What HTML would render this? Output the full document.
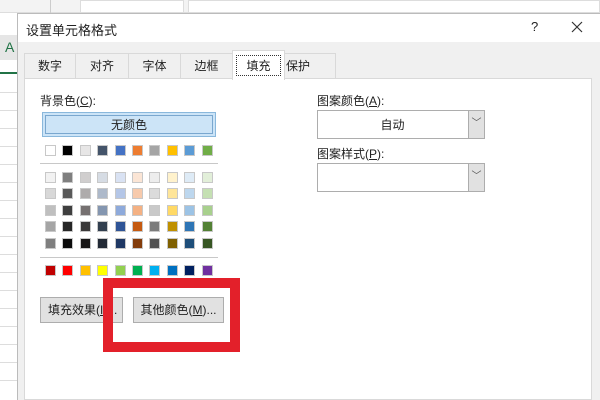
<!DOCTYPE html>
<html><head><meta charset="utf-8"><style>
*{margin:0;padding:0;box-sizing:border-box}
body{width:600px;height:400px;overflow:hidden;background:#fff;position:relative;font-family:"Liberation Sans","Noto Sans CJK SC",sans-serif;font-size:12px;color:#222}
.a{position:absolute}
.sw{position:absolute;width:11px;height:11px;border:1px solid #c8c8c8}
</style></head><body>
<!-- excel background -->
<div class="a" style="left:0;top:0;width:600px;height:13px;background:#f3f3f3;border-bottom:1px solid #ddd"></div>
<div class="a" style="left:50px;top:0;width:1px;height:13px;background:#ccc"></div>
<div class="a" style="left:80px;top:0;width:104px;height:13px;background:#fff;border:1px solid #ddd"></div>
<div class="a" style="left:188px;top:0;width:412px;height:13px;background:#fff;border:1px solid #ddd"></div>
<div class="a" style="left:0;top:35px;width:17px;height:25px;background:#e6e6e6"></div>
<div class="a" style="left:5px;top:39px;color:#217346;font-size:14px">A</div>
<div class="a" style="left:0;top:72px;width:17px;height:2px;background:#217346"></div>
<div class="a" style="left:0;top:92px;width:17px;height:1px;background:#ddd"></div>
<div class="a" style="left:0;top:110px;width:17px;height:1px;background:#ddd"></div>
<div class="a" style="left:0;top:128px;width:17px;height:1px;background:#ddd"></div>
<div class="a" style="left:0;top:146px;width:17px;height:1px;background:#ddd"></div>
<div class="a" style="left:0;top:164px;width:17px;height:1px;background:#ddd"></div>
<div class="a" style="left:0;top:182px;width:17px;height:1px;background:#ddd"></div>
<div class="a" style="left:0;top:200px;width:17px;height:1px;background:#ddd"></div>
<div class="a" style="left:0;top:218px;width:17px;height:1px;background:#ddd"></div>
<div class="a" style="left:0;top:236px;width:17px;height:1px;background:#ddd"></div>
<div class="a" style="left:0;top:254px;width:17px;height:1px;background:#ddd"></div>
<div class="a" style="left:0;top:272px;width:17px;height:1px;background:#ddd"></div>
<div class="a" style="left:0;top:290px;width:17px;height:1px;background:#ddd"></div>
<div class="a" style="left:0;top:308px;width:17px;height:1px;background:#ddd"></div>
<div class="a" style="left:0;top:326px;width:17px;height:1px;background:#ddd"></div>
<div class="a" style="left:0;top:344px;width:17px;height:1px;background:#ddd"></div>
<div class="a" style="left:0;top:362px;width:17px;height:1px;background:#ddd"></div>
<div class="a" style="left:0;top:380px;width:17px;height:1px;background:#ddd"></div>
<!-- dialog -->
<div class="a" style="left:17px;top:13px;width:583px;height:387px;background:#f0f0f0;border-left:1px solid #bbb;border-top:1px solid #bbb"></div>
<div class="a" style="left:18px;top:14px;width:582px;height:28px;background:#fff"></div>
<div class="a" style="left:26px;top:20px;font-size:13px">设置单元格格式</div>
<div class="a" style="left:531px;top:19px;font-size:13px">?</div>
<svg class="a" style="left:571px;top:21px" width="12" height="12"><path d="M1 1L11 11M11 1L1 11" stroke="#333" stroke-width="1.2"/></svg>
<!-- tabs -->
<div class="a" style="left:24px;top:78px;width:568px;height:322px;background:#fff;border:1px solid #d9d9d9"></div>
<div class="a" style="left:24px;top:53px;width:52px;height:26px;border:1px solid #d9d9d9;background:#f0f0f0;text-align:center;line-height:25px">数字</div>
<div class="a" style="left:75px;top:53px;width:54px;height:26px;border:1px solid #d9d9d9;background:#f0f0f0;text-align:center;line-height:25px">对齐</div>
<div class="a" style="left:128px;top:53px;width:53px;height:26px;border:1px solid #d9d9d9;background:#f0f0f0;text-align:center;line-height:25px">字体</div>
<div class="a" style="left:180px;top:53px;width:53px;height:26px;border:1px solid #d9d9d9;background:#f0f0f0;text-align:center;line-height:25px">边框</div>
<div class="a" style="left:284px;top:53px;width:52px;height:26px;border:1px solid #d9d9d9;background:#f0f0f0;text-align:left;padding-left:1px;line-height:25px">保护</div>
<div class="a" style="left:232px;top:50px;width:53px;height:30px;border:1px solid #d9d9d9;border-bottom:none;background:#fff"></div>
<div class="a" style="left:236px;top:55px;width:45px;height:21px;border:1px dotted #333;text-align:center;line-height:20px">填充</div>
<!-- left -->
<div class="a" style="left:40px;top:92px">背景色(<u>C</u>):</div>
<div class="a" style="left:42px;top:112px;width:174px;height:25px;background:#cce4f7;border:1px solid #8ab8dc;text-align:center;line-height:24px"><div style="position:absolute;left:2px;top:2px;right:2px;bottom:2px;border:1px solid #7aa7cf"></div>无颜色</div>
<div class="a" style="left:40px;top:163px;width:178px;height:1px;background:#c8c8c8"></div>
<div class="a" style="left:40px;top:257px;width:178px;height:1px;background:#c8c8c8"></div>
<div id="sw"></div>
<!-- right -->
<div class="a" style="left:317px;top:92px">图案颜色(<u>A</u>):</div>
<div class="a" style="left:317px;top:110px;width:168px;height:29px;background:#fff;border:1px solid #adadad;text-align:center;line-height:28px;padding-right:17px">自动</div>
<div class="a" style="left:468px;top:111px;width:16px;height:27px;background:#e1e1e1;border-left:1px solid #adadad;text-align:center;line-height:25px;color:#555;font-size:10px">﹀</div>
<div class="a" style="left:317px;top:145px">图案样式(<u>P</u>):</div>
<div class="a" style="left:317px;top:163px;width:168px;height:29px;background:#fff;border:1px solid #adadad"></div>
<div class="a" style="left:468px;top:164px;width:16px;height:27px;background:#e1e1e1;border-left:1px solid #adadad;text-align:center;line-height:25px;color:#555;font-size:10px">﹀</div>
<!-- buttons -->
<div class="a" style="left:40px;top:297px;width:83px;height:26px;background:#e1e1e1;border:1px solid #adadad;line-height:25px;padding-left:7px;white-space:nowrap;overflow:hidden">填充效果(<u>I</u>)...</div>
<div class="a" style="left:133px;top:297px;width:91px;height:26px;background:#e1e1e1;border:1px solid #adadad;line-height:25px;text-align:center;white-space:nowrap">其他颜色(<u>M</u>)...</div>
<div class="a" style="left:103px;top:278px;width:137px;height:74px;border:10px solid #e3202a"></div>
<script>
var rows=[
[145,["#fff","#000","#e7e6e6","#44546a","#4472c4","#ed7d31","#a5a5a5","#ffc000","#5b9bd5","#70ad47"]],
[172,["#f2f2f2","#7f7f7f","#d0cece","#d6dce4","#d9e2f3","#fbe5d5","#ededed","#fff2cc","#deebf6","#e2efd9"]],
[188,["#d8d8d8","#595959","#aeabab","#adb9ca","#b4c6e7","#f7caac","#dbdbdb","#fee599","#bdd7ee","#c5e0b3"]],
[205,["#bfbfbf","#3f3f3f","#757070","#8496b0","#8eaadb","#f4b183","#c9c9c9","#ffd965","#9cc3e5","#a8d08d"]],
[221,["#a5a5a5","#262626","#3a3838","#323f4f","#2f5496","#c55a11","#7b7b7b","#bf9000","#2e75b5","#538135"]],
[238,["#7f7f7f","#0c0c0c","#171616","#222a35","#1f3864","#833c0b","#525252","#7f6000","#1e4e79","#375623"]],
[265,["#c00000","#ff0000","#ffc000","#ffff00","#92d050","#00b050","#00b0f0","#0070c0","#002060","#7030a0"]]];
var h="";rows.forEach(function(r){r[1].forEach(function(c,i){h+='<div class="sw" style="left:'+(45+i*17.4)+'px;top:'+r[0]+'px;background:'+c+'"></div>';});});
document.getElementById("sw").outerHTML=h;
</script>
</body></html>
